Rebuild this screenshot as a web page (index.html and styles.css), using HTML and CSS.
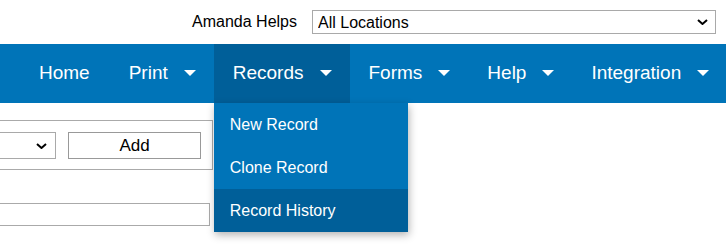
FILE: index.html
```html
<!DOCTYPE html>
<html lang="en">
<head>
    <meta charset="UTF-8">
    <meta name="viewport" content="width=device-width, initial-scale=1.0">
    <title>Records</title>
    <link rel="stylesheet" href="styles.css">
</head>
<body>
    <div class="topBar">
        <span class="userName">Amanda Helps</span>
        <div class="selectWrap locationWrap">
            <select class="locationSelect">
                <option>All Locations</option>
            </select>
            <svg class="chevron" width="11" height="6" viewBox="0 0 11 6"><path d="M1 1 L5.5 5 L10 1" fill="none" stroke="#000" stroke-width="2"/></svg>
        </div>
    </div>

    <nav class="mainNav">
        <ul class="navList">
            <li class="navItem home">Home</li>
            <li class="navItem">Print <span class="caret"></span></li>
            <li class="navItem active">
                Records <span class="caret"></span>
                <ul class="dropdown">
                    <li>New Record</li>
                    <li>Clone Record</li>
                    <li class="hover">Record History</li>
                </ul>
            </li>
            <li class="navItem">Forms <span class="caret"></span></li>
            <li class="navItem">Help <span class="caret"></span></li>
            <li class="navItem">Integration <span class="caret"></span></li>
        </ul>
    </nav>

    <div class="content">
        <div class="addBox">
            <div class="selectWrap typeWrap">
                <select class="typeSelect"></select>
                <svg class="chevron" width="11" height="6" viewBox="0 0 11 6"><path d="M1 1 L5.5 5 L10 1" fill="none" stroke="#000" stroke-width="2"/></svg>
            </div>
            <button class="addButton">Add</button>
        </div>
        <input class="searchInput" type="text">
    </div>
</body>
</html>
```

FILE: styles.css
```css
html {
    height: 100%;
}

body {
    margin: 0;
    min-height: 100%;
    font-family: "Liberation Sans", Arial, sans-serif;
    color: #000;
    background: #fff;
    overflow: hidden;
}

.topBar {
    height: 44px;
    display: flex;
    justify-content: flex-end;
    align-items: center;
    padding-right: 10px;
    box-sizing: border-box;
}

.userName {
    font-size: 16px;
    margin-right: 15px;
}

.selectWrap {
    position: relative;
    display: inline-block;
}

.selectWrap select {
    appearance: none;
    -webkit-appearance: none;
    background: #fff;
    border: 1px solid #a9a9a9;
    border-radius: 0;
    font-family: inherit;
    margin: 0;
    box-sizing: border-box;
    display: block;
}

.chevron {
    position: absolute;
    top: 50%;
    margin-top: -3px;
    pointer-events: none;
}

.locationSelect {
    width: 404px;
    height: 24px;
    font-size: 16px;
    padding: 0 5px;
}

.locationWrap .chevron {
    right: 8px;
}

.mainNav {
    height: 59px;
    background: #0074b8;
}

.navList {
    list-style: none;
    margin: 0;
    padding: 0 0 0 20px;
    display: flex;
    height: 100%;
}

.navItem {
    position: relative;
    display: flex;
    align-items: center;
    padding: 0 18px 2px 19px;
    font-size: 19px;
    color: #fff;
    white-space: nowrap;
}

.navItem.home {
    padding-right: 20px;
}

.navItem.active {
    background: #005f99;
}

.caret {
    width: 0;
    height: 0;
    margin-left: 16px;
    border-left: 6px solid transparent;
    border-right: 6px solid transparent;
    border-top: 6px solid #fff;
}

.dropdown {
    position: absolute;
    top: 59px;
    left: 0;
    width: 194px;
    margin: 0;
    padding: 0;
    list-style: none;
    background: #0074b8;
    box-shadow: 1px 3px 8px rgba(0, 0, 0, 0.3);
    z-index: 5;
}

.dropdown li {
    height: 43px;
    line-height: 43px;
    padding-left: 16px;
    font-size: 16px;
    color: #fff;
}

.dropdown li.hover {
    background: #005f99;
}

.content {
    padding-top: 17px;
}

.addBox {
    display: flex;
    align-items: center;
    gap: 12px;
    width: 313px;
    margin-left: -100px;
    padding: 11px 11px 10px 12px;
    border: 1px solid #aaa;
    box-sizing: border-box;
}

.typeSelect {
    width: 143px;
    height: 27px;
}

.typeWrap .chevron {
    right: 9px;
}

.addButton {
    width: 135px;
    height: 27px;
    background: #fff;
    border: 1px solid #999;
    border-radius: 0;
    font-family: inherit;
    font-size: 17px;
    color: #000;
    padding: 0;
}

.searchInput {
    display: block;
    margin: 33px 0 0 -50px;
    width: 260px;
    height: 23px;
    border: 1px solid #aaa;
    box-sizing: border-box;
    padding: 0;
}
```
